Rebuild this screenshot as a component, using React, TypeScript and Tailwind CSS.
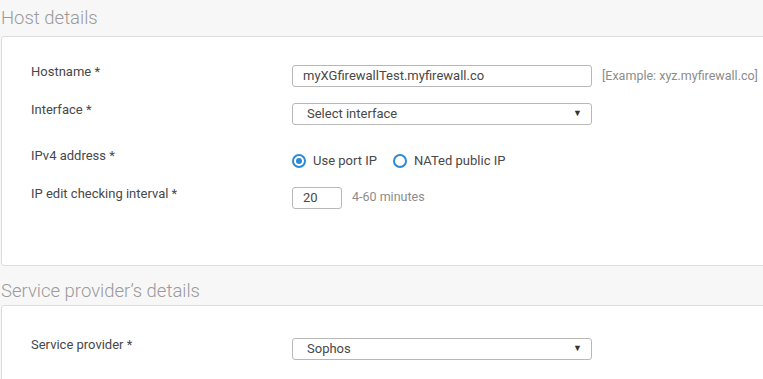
import { ReactNode } from 'react';

const font = { fontFamily: 'Roboto, "Liberation Sans", sans-serif' };

function Row({ label, top, children }: { label: string; top: string; children: ReactNode }) {
  return (
    <div className={`flex items-start ${top}`}>
      <div className="w-[261px] shrink-0 text-[13px] leading-[14px] text-[#484848]">{label}</div>
      <div className="flex items-center">{children}</div>
    </div>
  );
}

function Select({ value }: { value: string }) {
  return (
    <div className="flex h-[22px] w-[300px] items-center justify-between rounded-[3px] border border-[#b8b8b8] bg-white pl-[14px] pr-[9px] text-[13px] text-[#484848]">
      <span>{value}</span>
      <span className="text-[9px] text-[#333]">▼</span>
    </div>
  );
}

function Radio({ checked, label }: { checked?: boolean; label: string }) {
  return (
    <label className="flex items-center gap-[7px] text-[13px] text-[#484848]">
      <span className="flex h-[14px] w-[14px] items-center justify-center rounded-full border-2 border-[#2b8ad6] bg-white">
        {checked && <span className="h-[6px] w-[6px] rounded-full bg-[#2b8ad6]" />}
      </span>
      {label}
    </label>
  );
}

export default function App() {
  return (
    <div className="h-[379px] w-[763px] overflow-hidden bg-[#f7f7f7]" style={font}>
      <h2 className="h-[36px] pt-[6px] pl-[1px] text-[18.5px] font-light leading-[24px] text-[#9a9a9a]">Host details</h2>
      <div className="-mr-4 ml-[1px] h-[230px] rounded-[3px] border border-[#dcdcdc] bg-white pl-[29px] pt-[28px]">
        <Row label="Hostname *" top="">
          <div className="flex h-[22px] w-[300px] items-center rounded-[3px] border border-[#b8b8b8] pl-[10px] text-[13px] text-[#484848]">
            myXGfirewallTest.myfirewall.co
          </div>
          <span className="ml-[10px] text-[12.5px] text-[#8c8c8c]">[Example: xyz.myfirewall.co]</span>
        </Row>
        <Row label="Interface *" top="mt-[16px]">
          <Select value="Select interface" />
        </Row>
        <Row label="IPv4 address *" top="mt-[24px]">
          <div className="flex items-center gap-[16px] pt-[2px]">
            <Radio checked label="Use port IP" />
            <Radio label="NATed public IP" />
          </div>
        </Row>
        <Row label="IP edit checking interval *" top="mt-[16px]">
          <div className="flex h-[22px] w-[50px] items-center rounded-[3px] border border-[#b8b8b8] pl-[10px] text-[13px] text-[#484848]">
            20
          </div>
          <span className="ml-[10px] text-[12.5px] text-[#8c8c8c]">4-60 minutes</span>
        </Row>
      </div>
      <h2 className="h-[39px] pt-[13px] pl-[1px] text-[18.5px] font-light leading-[24px] text-[#9a9a9a]">Service provider’s details</h2>
      <div className="-mr-4 ml-[1px] h-[120px] rounded-[3px] border border-[#dcdcdc] bg-white pl-[29px] pt-[32px]">
        <Row label="Service provider *" top="">
          <Select value="Sophos" />
        </Row>
      </div>
    </div>
  );
}
